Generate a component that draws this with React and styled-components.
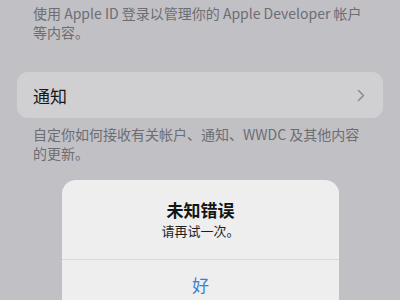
import React from 'react'
import styled, { createGlobalStyle } from 'styled-components'

const Global = createGlobalStyle`
  html, body {
    margin: 0;
    padding: 0;
    background: #c1c0c5;
  }
  body {
    font-family: "Noto Sans CJK SC", "Noto Sans", "Liberation Sans", sans-serif;
  }
`

const Screen = styled.div`
  position: relative;
  width: 400px;
  height: 300px;
  overflow: hidden;
  background: #c1c0c5;
  box-sizing: border-box;
  padding: 4px 17px 0 17px;
`

const Note = styled.p`
  margin: 0;
  padding: 0 16px;
  font-size: 14px;
  line-height: 19px;
  color: #6d6d72;
`

const Group = styled.div`
  margin-top: 30px;
  height: 46px;
  border-radius: 11px;
  background: #d0d0d2;
  display: flex;
  align-items: center;
  justify-content: space-between;
  padding: 0 16px;
`

const RowLabel = styled.span`
  font-size: 17px;
  color: #161616;
`

const Chevron = styled.svg`
  width: 8px;
  height: 13px;
  margin-right: 2px;
`

const Footer = styled(Note)`
  margin-top: 7px;
`

const Dim = styled.div`
  position: absolute;
  left: 62px;
  top: 180px;
  width: 277px;
  height: 140px;
  border-radius: 14px;
  background: #eeeeee;
  display: flex;
  flex-direction: column;
`

const AlertBody = styled.div`
  height: 80px;
  box-sizing: border-box;
  padding-top: 19px;
  display: flex;
  flex-direction: column;
  align-items: center;
  border-bottom: 1px solid #d8d8da;
`

const Title = styled.div`
  font-size: 17px;
  line-height: 22px;
  font-weight: 700;
  color: #141414;
`

const Message = styled.div`
  margin-top: 1px;
  font-size: 13px;
  line-height: 18px;
  color: #1e1e1e;
`

const Action = styled.div`
  height: 48px;
  display: flex;
  align-items: center;
  justify-content: center;
  font-size: 17px;
  color: #3b82d6;
`

export default function App() {
  return (
    <>
      <Global />
      <Screen>
        <Note>使用 Apple ID 登录以管理你的 Apple Developer 帐户等内容。</Note>
        <Group>
          <RowLabel>通知</RowLabel>
          <Chevron viewBox="0 0 8 13">
            <path d="M1.5 1.5 L6.5 6.5 L1.5 11.5" fill="none" stroke="#8d8d91" strokeWidth="1.6" strokeLinecap="round" strokeLinejoin="round" />
          </Chevron>
        </Group>
        <Footer>自定你如何接收有关帐户、通知、WWDC 及其他内容的更新。</Footer>
        <Dim>
          <AlertBody>
            <Title>未知错误</Title>
            <Message>请再试一次。</Message>
          </AlertBody>
          <Action>好</Action>
        </Dim>
      </Screen>
    </>
  )
}
